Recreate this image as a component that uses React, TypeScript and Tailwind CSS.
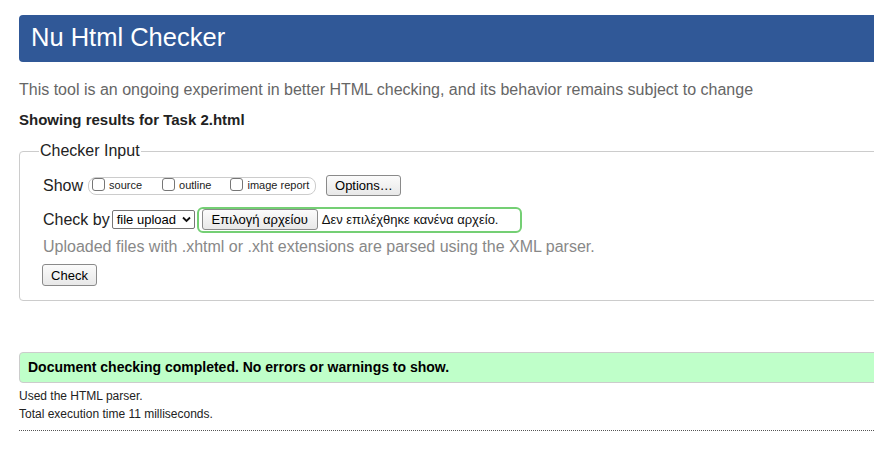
const font = { fontFamily: '"Liberation Sans", Arial, sans-serif' };

function Box({ label, className = '' }: { label: string; className?: string }) {
  return (
    <span className={`flex items-center ${className}`}>
      <span className="w-[13px] h-[13px] rounded-[3px] border border-[#767676] bg-white mr-[4px] -mt-[3px]" />
      <span className="text-[11px] text-[#222]">{label}</span>
    </span>
  );
}

function Btn({ children, className = '' }: { children: React.ReactNode; className?: string }) {
  return (
    <button
      type="button"
      className={`h-[21px] px-[8px] text-[13px] text-black leading-none rounded-[3px] border border-[#8a8a8a] bg-gradient-to-b from-[#fbfbfb] to-[#e8e8e8] ${className}`}
    >
      {children}
    </button>
  );
}

export default function App() {
  return (
    <div className="w-[874px] h-[455px] overflow-hidden bg-white text-black" style={font}>
      <div className="pl-[19px] pt-[15px] w-[900px]">
        <header className="h-[47px] bg-[#305897] rounded-l-[4px] flex items-center pl-[12px]">
          <h1 className="text-[25.5px] text-white leading-none -mt-[1px]">Nu Html Checker</h1>
        </header>

        <p className="mt-[18px] text-[16px] leading-[20px] text-[#666]">
          This tool is an ongoing experiment in better HTML checking, and its behavior remains subject to change
        </p>
        <p className="mt-[10px] text-[15px] leading-[20px] font-bold text-[#222]">Showing results for Task 2.html</p>

        <fieldset className="mt-[11px] border border-[#ccc] rounded-l-[4px] pl-[23px] pb-[13px]">
          <legend className="-ml-[4px] px-[1px] text-[16px] leading-[20px] text-[#222]">Checker Input</legend>

          <div className="mt-[14px] flex items-center h-[21px]">
            <span className="text-[16px] text-[#222]">Show</span>
            <div className="ml-[5px] w-[228px] h-[18px] rounded-[8px] border border-[#ccc] flex items-center pl-[3px]">
              <Box label="source" />
              <Box label="outline" className="ml-[20px]" />
              <Box label="image report" className="ml-[19px]" />
            </div>
            <Btn className="ml-[10px] w-[75px]">Options…</Btn>
          </div>

          <div className="mt-[11px] flex items-center h-[25px]">
            <span className="text-[16px] text-[#222]">Check by</span>
            <div className="ml-[2px] w-[83px] h-[19px] border border-[#767676] rounded-[2px] bg-white flex items-center pl-[4px] pr-[3px] justify-between">
              <span className="text-[13px] leading-none">file upload</span>
              <svg width="9" height="7" viewBox="0 0 9 7">
                <path d="M1 1.5 L4.5 5 L8 1.5" fill="none" stroke="#111" strokeWidth="1.8" />
              </svg>
            </div>
            <div className="ml-[2px] w-[325px] h-[26px] rounded-[6px] border-2 border-[#74cf74] flex items-center pl-[3px]">
              <Btn className="w-[116px] h-[20px] px-0">Επιλογή αρχείου</Btn>
              <span className="ml-[4px] text-[13px] text-[#111]">Δεν επιλέχθηκε κανένα αρχείο.</span>
            </div>
          </div>

          <p className="mt-[5px] text-[16px] leading-[20px] text-[#888]">
            Uploaded files with .xhtml or .xht extensions are parsed using the XML parser.
          </p>

          <Btn className="mt-[7px] -ml-[1px] w-[55px] h-[22px]">Check</Btn>
        </fieldset>

        <div className="mt-[51px] h-[31px] bg-[#bfffc9] border border-[#ccc] rounded-l-[4px] flex items-center pl-[8px]">
          <span className="text-[14px] font-bold text-black">Document checking completed. No errors or warnings to show.</span>
        </div>

        <p className="mt-[4px] text-[12px] leading-[18px] text-[#222]">Used the HTML parser.</p>
        <p className="text-[12px] leading-[18px] text-[#222]">Total execution time 11 milliseconds.</p>
        <div className="mt-[7px] border-t border-dotted border-[#555]" />
      </div>
    </div>
  );
}
